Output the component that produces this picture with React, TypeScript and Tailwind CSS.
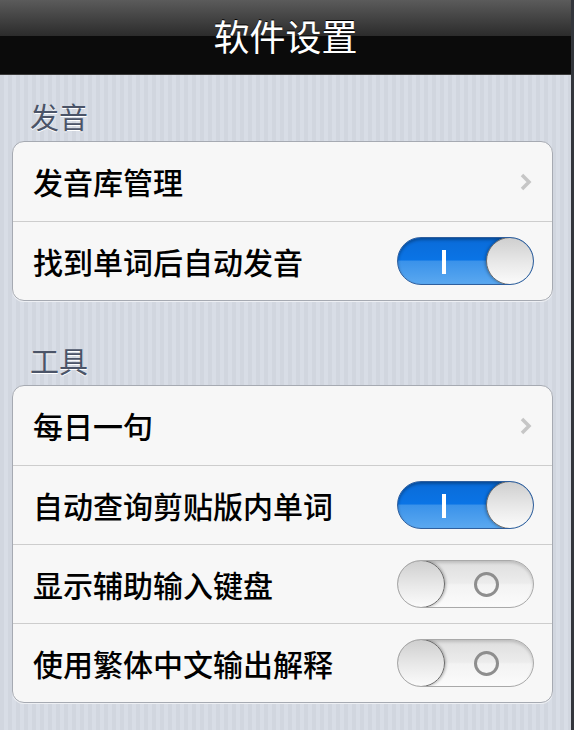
import React from 'react';

const font = { fontFamily: '"Noto Sans CJK SC", "Noto Sans", sans-serif' };

function Chevron() {
    return (
        <svg width="14" height="20" viewBox="0 0 14 20" className="mr-[1px]">
            <polyline points="3,3 10,10 3,17" fill="none" stroke="#c6c6c6" strokeWidth="3.5" />
        </svg>
    );
}

function Toggle({ on }: { on: boolean }) {
    if (on) {
        return (
            <div className="relative w-[137px] h-[48px] rounded-full border border-[#2f5f9e] overflow-hidden bg-[linear-gradient(180deg,#0a6bd8_0%,#0a74e6_48%,#3a92ea_50%,#5aa8f0_100%)] shadow-[inset_0_2px_3px_rgba(0,0,0,0.3)]">
                <div className="absolute left-[44px] top-[12px] w-[4px] h-[24px] bg-white" />
                <div className="absolute right-[-1px] top-[-1px] w-[48px] h-[48px] rounded-full border border-[#6b6b6b] bg-[linear-gradient(180deg,#cfcfcf_0%,#e9e9e9_55%,#fbfbfb_100%)] shadow-[-1px_0_3px_rgba(0,0,0,0.3)]" />
            </div>
        );
    }
    return (
        <div className="relative w-[137px] h-[48px] rounded-full border border-[#a9a9a9] overflow-hidden bg-[linear-gradient(180deg,#dedede_0%,#ececec_48%,#f3f3f3_52%,#fbfbfb_100%)] shadow-[inset_0_2px_3px_rgba(0,0,0,0.15)]">
            <div className="absolute left-[76px] top-[11px] w-[25px] h-[25px] rounded-full border-[3.5px] border-[#8e8e8e]" />
            <div className="absolute left-[-1px] top-[-1px] w-[48px] h-[48px] rounded-full border border-[#6b6b6b] bg-[linear-gradient(180deg,#cfcfcf_0%,#e9e9e9_55%,#fbfbfb_100%)] shadow-[1px_0_3px_rgba(0,0,0,0.3)]" />
        </div>
    );
}

type Row = { label: string; kind: 'link' | 'on' | 'off' };

function Section({ title, rows, first }: { title: string; rows: Row[]; first?: boolean }) {
    return (
        <div className={first ? 'pt-[23px]' : 'pt-[41px]'}>
            <div className="h-[36px] leading-[36px] pl-[30px] text-[29px] text-[#4b5468] [text-shadow:0_1px_0_#ffffff]">
                {title}
            </div>
            <div className="mt-[7px] ml-[12px] w-[541px] rounded-[12px] border border-[#a6aab2] bg-[#f7f7f7] shadow-[0_1px_0_#eef0f4] overflow-hidden">
                {rows.map((row, i) => (
                    <div
                        key={row.label}
                        className={`h-[79px] flex items-center justify-between pl-[20px] pr-[18px] ${i > 0 ? 'border-t border-[#cdcdcd]' : ''}`}
                    >
                        <span className="text-[30px] font-medium text-black">{row.label}</span>
                        {row.kind === 'link' ? <Chevron /> : <Toggle on={row.kind === 'on'} />}
                    </div>
                ))}
            </div>
        </div>
    );
}

export default function App() {
    return (
        <div className="w-[574px] h-[730px] overflow-hidden flex" style={font}>
            <div className="w-[571px] flex flex-col">
                {/* Nav bar */}
                <div className="h-[75px] flex items-center justify-center bg-[linear-gradient(180deg,#5b5b5b_0%,#2c2c2c_48%,#0b0b0b_49%,#0b0b0b_100%)] border-b border-[#3a3a3a]">
                    <h1 className="text-[36px] text-white [text-shadow:0_-1px_0_#000] -mt-[5px]">软件设置</h1>
                </div>

                <div className="flex-1 bg-[repeating-linear-gradient(90deg,#d1d6df_0px,#d1d6df_4px,#d8dde6_4px,#d8dde6_8px)]">
                    <Section
                        first
                        title="发音"
                        rows={[
                            { label: '发音库管理', kind: 'link' },
                            { label: '找到单词后自动发音', kind: 'on' },
                        ]}
                    />
                    <Section
                        title="工具"
                        rows={[
                            { label: '每日一句', kind: 'link' },
                            { label: '自动查询剪贴版内单词', kind: 'on' },
                            { label: '显示辅助输入键盘', kind: 'off' },
                            { label: '使用繁体中文输出解释', kind: 'off' },
                        ]}
                    />
                </div>
            </div>
            <div className="w-[3px] bg-[#33363c]" />
        </div>
    );
}
